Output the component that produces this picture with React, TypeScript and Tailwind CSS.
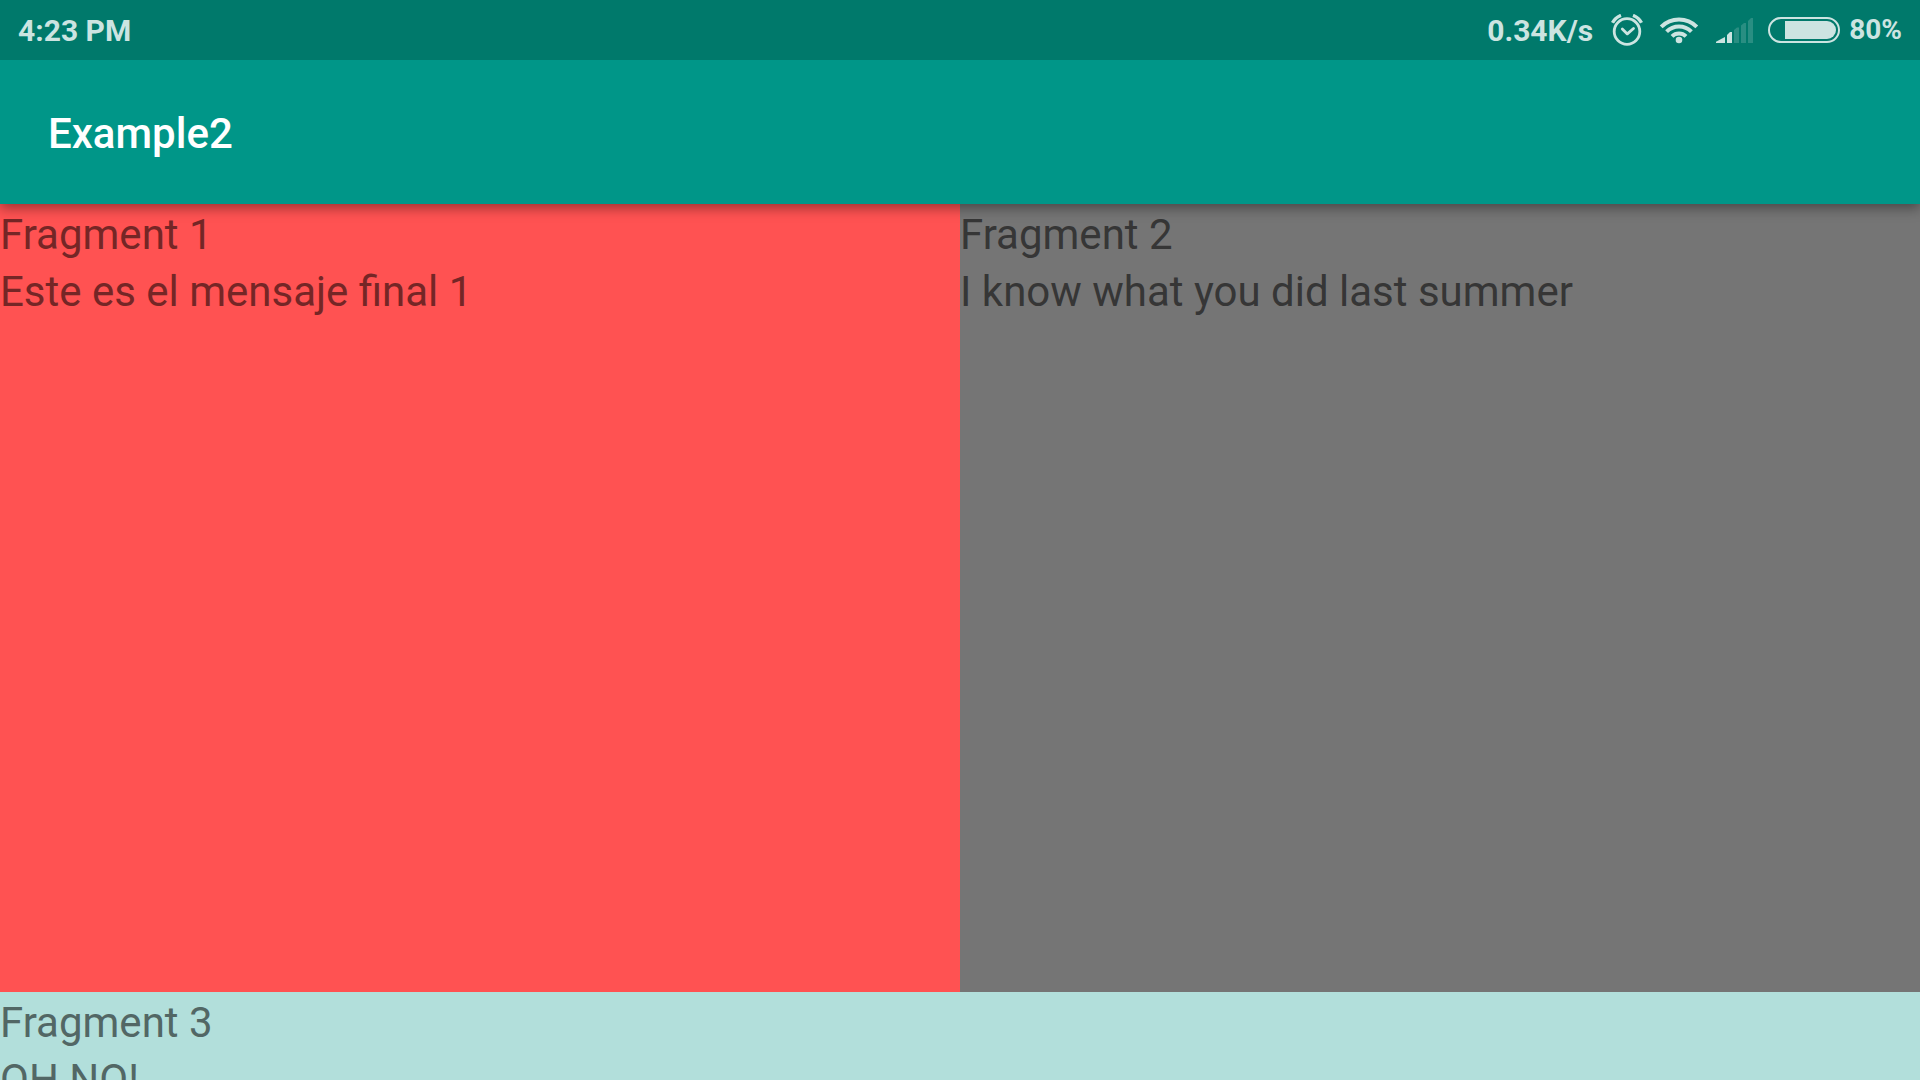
const AlarmIcon = () => (
  <svg className="h-8 w-8" viewBox="0 0 32 32" fill="none" stroke="currentColor" aria-label="Alarm set">
    <circle cx="16" cy="17.5" r="12.8" strokeWidth="2.8" />
    <path d="M11.3 14.9l5 5 6.2-5.4" strokeWidth="2.8" strokeLinecap="round" strokeLinejoin="round" />
    <path d="M1.5 8.8Q4.3 3.5 10 1.400M30.5 8.8Q27.7 3.5 22 1.400" strokeWidth="3.4" />
  </svg>
);

const WifiIcon = () => (
  <svg className="h-7 w-10" viewBox="0 0 40 28" fill="none" stroke="currentColor" strokeWidth="4" aria-label="Wi-Fi">
    <circle cx="20" cy="24" r="3.3" fill="currentColor" stroke="none" />
    <path d="M2.2 10.8a25.2 25.2 0 0 1 35.6 0" />
    <path d="M7.6 15.6a17.6 17.6 0 0 1 24.8 0" />
    <path d="M13 20.4a10 10 0 0 1 14 0" />
  </svg>
);

const SignalIcon = () => (
  <svg className="h-7 w-10" viewBox="0 0 40 28" fill="currentColor" aria-label="Signal strength">
    <path d="M1 27v-1.3L8 22l2-1v6z" />
    <path d="M12 27V19l3-3h2v11z" />
    <g opacity="0.2">
      <path d="M19 27V14l3-2.500h2V27z" />
      <path d="M26 27V9.500l3-2.500h2v20z" />
      <path d="M33 27V5l3-3h2v25z" />
    </g>
  </svg>
);

const BatteryIcon = () => (
  <svg className="h-[26px] w-[72px]" viewBox="0 0 72 26" aria-label="Battery">
    <rect x="1" y="1" width="70" height="24" rx="12" fill="none" stroke="currentColor" strokeWidth="2" />
    <path d="M17 4h42a9 9 0 0 1 0 18H17z" fill="currentColor" />
  </svg>
);

type FragmentProps = { title: string; message: string; className: string };

const Fragment = ({ title, message, className }: FragmentProps) => (
  <section className={`min-h-0 min-w-0 overflow-hidden text-[42px] leading-[57px] ${className}`}>
    <h2 className="pt-0.5">{title}</h2>
    <p>{message}</p>
  </section>
);

export default function App() {
  return (
    <div className="flex h-screen flex-col overflow-hidden font-['Roboto',sans-serif]">
      <div className="relative z-20 flex h-[60px] shrink-0 items-center bg-[#00796b] px-[18px] text-[30px] font-bold text-[#cce4e1]">
        <time>4:23 PM</time>
        <div className="ml-auto flex items-center">
          <span>0.34K/s</span>
          <div className="ml-[18px] flex items-center gap-4">
            <AlarmIcon />
            <WifiIcon />
            <SignalIcon />
          </div>
          <div className="ml-[13px] flex items-center gap-[9px]">
            <BatteryIcon />
            <span className="text-[28px]">80%</span>
          </div>
        </div>
      </div>
      <header className="relative z-10 flex h-36 shrink-0 items-center bg-[#009688] px-12 pt-0.5 text-white shadow-[0_4px_12px_rgba(0,0,0,0.4)]">
        <h1 className="text-[42px] leading-[57px] font-medium">Example2</h1>
      </header>
      <main className="flex min-h-0 flex-1 flex-col">
        <div className="grid min-h-0 flex-[9] grid-cols-2">
          <Fragment title="Fragment 1" message="Este es el mensaje final 1" className="bg-[#ff5252] text-[#752626]" />
          <Fragment title="Fragment 2" message="I know what you did last summer" className="bg-[#757575] text-[#363636]" />
        </div>
        <Fragment title="Fragment 3" message="OH NO!" className="flex-[1] bg-[#b2dfdb] text-[#526765]" />
      </main>
    </div>
  );
}
